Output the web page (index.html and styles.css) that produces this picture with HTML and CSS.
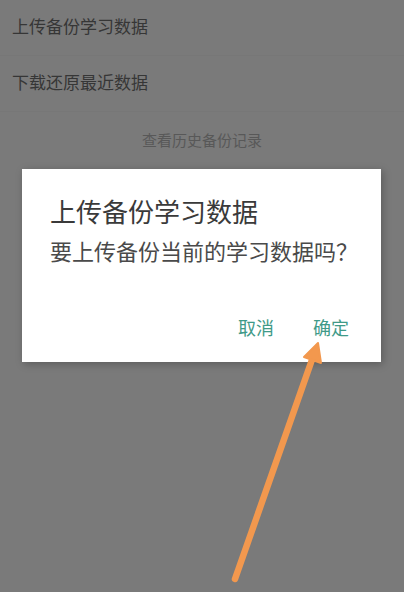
FILE: index.html
```html
<!DOCTYPE html>
<html lang="zh-CN">
<head>
<meta charset="utf-8">
<link rel="stylesheet" href="styles.css">
</head>
<body>
<div class="screen">
  <ul class="menu">
    <li class="item">上传备份学习数据</li>
    <li class="item">下载还原最近数据</li>
    <li class="item item-center">查看历史备份记录</li>
  </ul>
  <div class="dialog">
    <div class="dialog-title">上传备份学习数据</div>
    <div class="dialog-msg">要上传备份当前的学习数据吗？</div>
    <div class="dialog-actions">
      <span class="btn">取消</span>
      <span class="btn">确定</span>
    </div>
  </div>
  <svg class="arrow" width="404" height="592" viewBox="0 0 404 592">
    <line x1="235" y1="579" x2="314" y2="354" stroke="#f2984e" stroke-width="6.5" stroke-linecap="round"/>
    <polygon points="318,343 321,363 304,357" fill="#f2984e" stroke="#f2984e" stroke-width="2" stroke-linejoin="round"/>
  </svg>
</div>
</body>
</html>
```
FILE: styles.css
```css
html, body {
  margin: 0;
  padding: 0;
}
body {
  background: #7a7a7a;
  font-family: "Noto Sans CJK SC", "Noto Sans", sans-serif;
}
.screen {
  position: relative;
  width: 404px;
  height: 592px;
  overflow: hidden;
  background: #7a7a7a;
}
.menu {
  list-style: none;
  margin: 0;
  padding: 0;
}
.item {
  height: 56px;
  line-height: 52px;
  padding-left: 12px;
  font-size: 17px;
  color: #363636;
  border-bottom: 1px solid #777777;
  box-sizing: border-box;
}
.item-center {
  padding-left: 0;
  text-align: center;
  font-size: 15px;
  line-height: 56px;
  color: #585858;
  border-bottom: none;
}
.dialog {
  position: absolute;
  left: 22px;
  top: 169px;
  width: 359px;
  height: 193px;
  background: #ffffff;
  box-sizing: border-box;
  padding: 26px 32px 0 28px;
  box-shadow: 2px 2px 8px rgba(0, 0, 0, 0.25);
}
.dialog-title {
  font-size: 26px;
  line-height: 32px;
  color: #3a3a3a;
  white-space: nowrap;
}
.dialog-msg {
  margin-top: 7px;
  font-size: 22px;
  line-height: 32px;
  color: #4a4a4a;
  white-space: nowrap;
}
.dialog-actions {
  margin-top: 49px;
  display: flex;
  justify-content: flex-end;
  gap: 39px;
}
.btn {
  font-size: 18px;
  line-height: 24px;
  color: #3f9a88;
}
.arrow {
  position: absolute;
  left: 0;
  top: 0;
}
```
